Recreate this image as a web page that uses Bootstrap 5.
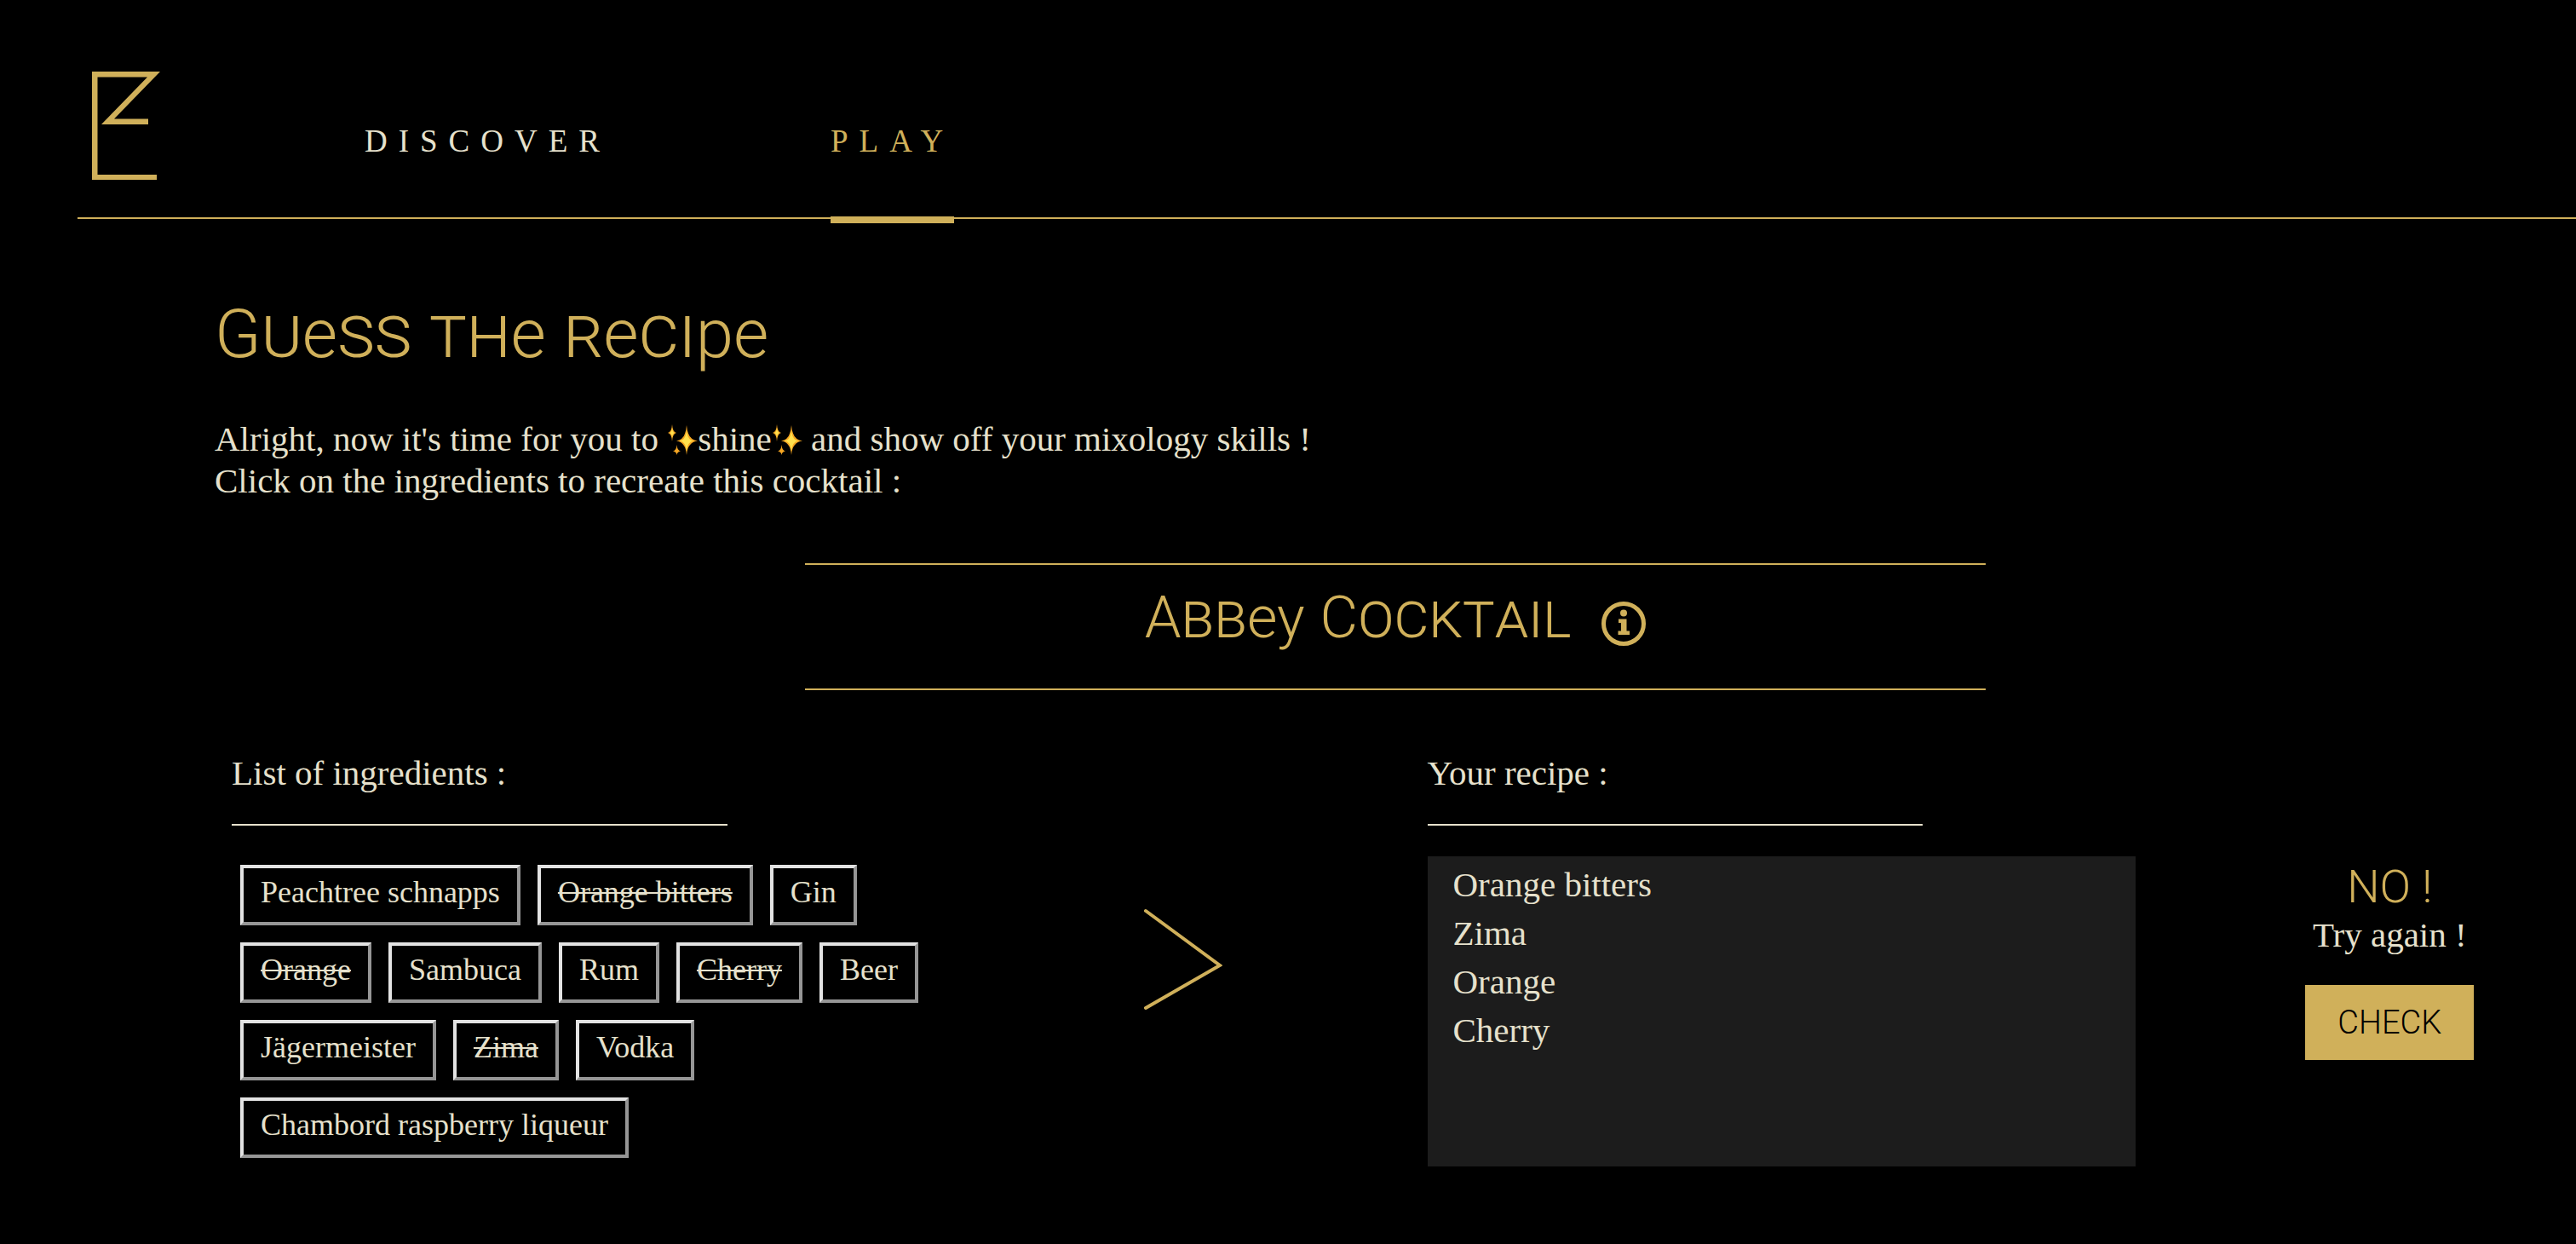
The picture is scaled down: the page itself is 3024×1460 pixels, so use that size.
<!DOCTYPE html>
<html lang="en">
<head>
<meta charset="utf-8">
<meta name="viewport" content="width=device-width, initial-scale=1">
<title>Guess the recipe</title>
<link href="https://cdn.jsdelivr.net/npm/bootstrap@5.3.0/dist/css/bootstrap.min.css" rel="stylesheet">
<style>
  :root { --gold: #d0b05a; --cream: #e6e1cc; --panel: #1c1c1c; }
  body { background: #000; color: var(--cream); font-family: "Liberation Serif", serif; font-size: 41px; line-height: 49px; }

  .site-header { margin-left: 91px; padding: 84px 0 0 17px; height: 257px; border-bottom: 2px solid var(--gold); }
  .site-logo { width: 80px; height: 127px; margin-right: 240px; }
  .site-nav { gap: 258px; margin-bottom: -7px; }
  .site-nav .nav-link { padding: 0 0 64px; border-bottom: 8px solid transparent; border-radius: 0; color: var(--cream); font-size: 37px; line-height: 49px; letter-spacing: 13px; }
  .site-nav .nav-link.active { color: var(--gold); border-bottom-color: var(--gold); }

  .game { margin-left: 252px; padding-top: 83px; }

  /* Display lettering: tall initials over small capitals, with a few true lowercase letters */
  .deco { font-family: Roboto, sans-serif; font-weight: 300; font-variant-caps: small-caps; color: var(--gold); line-height: 100px; margin: 0; }
  .deco .low { font-variant-caps: normal; font-size: .94em; line-height: 1; }
  .deco .initial { font-size: .94em; line-height: 1; }
  .deco-title { font-size: 85px; }
  .deco-cocktail { font-size: 73px; }

  .intro { margin: 51px 0 72px; }
  .sparkle { width: 36px; height: 36px; vertical-align: -5px; }
  .cocktail { width: 50%; padding: 10px 0 35px; border-top: 2px solid var(--gold); border-bottom: 2px solid var(--gold); gap: 36px; }
  .info-btn { margin-top: 18px; line-height: 0; }
  .info-btn svg { width: 52px; height: 52px; }

  .board { margin-top: 73px; padding-left: 20px; }
  .board-list { flex: 0 0 30.2%; }
  .board-arrow { flex: 0 0 20.8%; }
  .board-verdict { padding-left: 80px; }
  .arrow { width: 92px; height: 120px; }
  .board-title { font-size: 41px; font-weight: 400; line-height: 49px; width: 70%; padding-bottom: 35px; margin-bottom: 36px; border-bottom: 2px solid var(--cream); }

  .ingredient { margin: 10px; padding: 8px 20px 14px; font-size: 36px; line-height: 41px; color: var(--cream); background: transparent; border: 4px solid; border-color: #e3e3e3 #969696 #969696 #e3e3e3; border-radius: 0; }
  .ingredient.used { text-decoration: line-through; text-decoration-thickness: 2px; }
  .recipe { background: var(--panel); padding: 5px 30px; line-height: 57px; }

  .verdict-title { font: 300 54px/64px Roboto, sans-serif; color: var(--gold); }
  .check-btn { margin-top: 34px; padding: 0 38px; border: 0; border-radius: 0; background: var(--gold); color: #000; font: 300 38px/88px Roboto, sans-serif; }
</style>
</head>
<body>
<svg class="d-none" aria-hidden="true">
  <symbol id="sparkles" viewBox="0 0 36 36">
    <path fill="#f5a623" d="M23 1Q24 18 36 19.500Q24 21 23 36Q22 21 11 19.500Q22 18 23 1ZM6 0Q6.500 9 11 10Q6.500 11 6 20Q5.500 11 1 10Q5.500 9 6 0ZM11.500 24Q12 31 16 31.500Q12 32 11.500 36Q11 32 7 31.500Q11 31 11.500 24Z"/>
    <path fill="#ffe14d" d="M23 7Q24 18.500 31 19.500Q24 20.500 23 31Q22 20.500 15 19.500Q22 18.500 23 7ZM6 4Q6.500 9.500 9 10Q6.500 10.500 6 16Q5.500 10.500 3 10Q5.500 9.500 6 4Z"/>
  </symbol>
</svg>

<header class="site-header d-flex align-items-stretch">
  <a href="#" aria-label="Home"><svg class="site-logo d-block" viewBox="0 0 80 127" fill="#d0b05a"><path d="M0 0H80L26 55.500H66V62H11L65 6.500H6.500V121H76V127H0Z"/></svg></a>
  <nav class="nav site-nav flex-nowrap align-items-end">
    <a class="nav-link" href="#">DISCOVER</a>
    <a class="nav-link active" href="#" aria-current="page">PLAY</a>
  </nav>
</header>

<main class="game">
  <h1 class="deco deco-title"><span class="initial">G</span>u<span class="low">e</span>ss th<span class="low">e</span> r<span class="low">e</span>ci<span class="low">pe</span></h1>
  <p class="intro">Alright, now it's time for you to <svg class="sparkle" role="img" aria-label="✨"><use href="#sparkles"/></svg>shine<svg class="sparkle" role="img" aria-label="✨"><use href="#sparkles"/></svg> and show off your mixology skills !<br>Click on the ingredients to recreate this cocktail :</p>

  <section class="cocktail d-flex justify-content-center align-items-center mx-auto">
    <h2 class="deco deco-cocktail"><span class="initial">A</span>bb<span class="low">ey</span> <span class="initial">C</span>ocktail</h2>
    <button class="btn p-0 border-0 info-btn" type="button" aria-label="Information">
      <svg viewBox="0 0 52 52" fill="#d0b05a"><circle cx="26" cy="26" r="23.500" fill="none" stroke="#d0b05a" stroke-width="5"/><circle cx="26" cy="13.500" r="4"/><path d="M20 20.500H29.500V34.500H33V39H19.500V34.500H23V25H20Z"/></svg>
    </button>
  </section>

  <div class="board d-flex align-items-stretch">
    <section class="board-list">
      <h3 class="board-title">List of ingredients :</h3>
      <div class="d-flex flex-wrap">
        <button class="btn ingredient" type="button">Peachtree schnapps</button>
        <button class="btn ingredient used" type="button">Orange bitters</button>
        <button class="btn ingredient" type="button">Gin</button>
        <button class="btn ingredient used" type="button">Orange</button>
        <button class="btn ingredient" type="button">Sambuca</button>
        <button class="btn ingredient" type="button">Rum</button>
        <button class="btn ingredient used" type="button">Cherry</button>
        <button class="btn ingredient" type="button">Beer</button>
        <button class="btn ingredient" type="button">Jägermeister</button>
        <button class="btn ingredient used" type="button">Zima</button>
        <button class="btn ingredient" type="button">Vodka</button>
        <button class="btn ingredient" type="button">Chambord raspberry liqueur</button>
      </div>
    </section>
    <div class="board-arrow d-flex justify-content-center align-items-center">
      <svg class="arrow" viewBox="0 0 92 120" fill="none" stroke="#d0b05a" stroke-width="4" stroke-linecap="round" aria-hidden="true"><path d="M2 3L89 67L2 117"/></svg>
    </div>
    <section class="board-list d-flex flex-column">
      <h3 class="board-title">Your recipe :</h3>
      <ul class="recipe list-unstyled flex-grow-1 mb-0">
        <li>Orange bitters</li>
        <li>Zima</li>
        <li>Orange</li>
        <li>Cherry</li>
      </ul>
    </section>
    <section class="board-verdict flex-grow-1 d-flex flex-column justify-content-center align-items-center">
      <div class="verdict-title">NO !</div>
      <div>Try again !</div>
      <button class="btn check-btn" type="button">CHECK</button>
    </section>
  </div>
</main>
<script src="https://cdn.jsdelivr.net/npm/bootstrap@5.3.0/dist/js/bootstrap.bundle.min.js"></script>
</body>
</html>
